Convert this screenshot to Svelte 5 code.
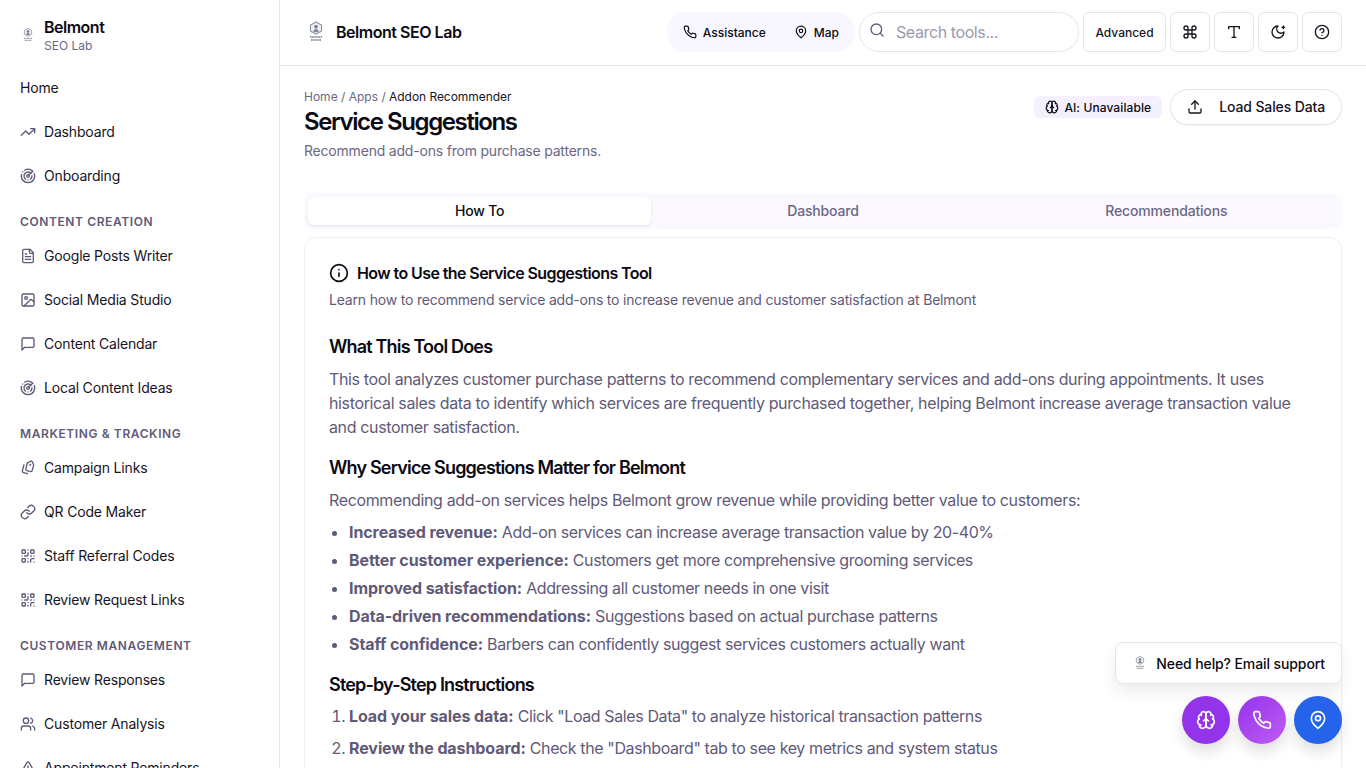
<script>
  const circle = (cx, cy, r) => `M${cx - r} ${cy}a${r} ${r} 0 1 0 ${r * 2} 0a${r} ${r} 0 1 0 ${-r * 2} 0`;
  const box = (x, y, s, r) => `M${x + r} ${y}h${s - 2 * r}a${r} ${r} 0 0 1 ${r} ${r}v${s - 2 * r}a${r} ${r} 0 0 1 ${-r} ${r}h${-(s - 2 * r)}a${r} ${r} 0 0 1 ${-r} ${-r}v${-(s - 2 * r)}a${r} ${r} 0 0 1 ${r} ${-r}z`;

  const icons = {
    trending: ['M22 7 13.5 15.5 8.5 10.5 2 17', 'M16 7h6v6'],
    radar: ['M19.07 4.93A10 10 0 0 0 6.99 3.34', 'M4 6h.01', 'M2.29 9.62A10 10 0 1 0 21.31 8.35', 'M16.24 7.76A6 6 0 1 0 8.23 16.67', 'M12 18h.01', 'M17.99 11.66A6 6 0 0 1 15.77 16.67', circle(12, 12, 2), 'm13.41 10.59 5.66-5.66'],
    file: ['M15 2H6a2 2 0 0 0-2 2v16a2 2 0 0 0 2 2h12a2 2 0 0 0 2-2V7Z', 'M14 2v4a2 2 0 0 0 2 2h4', 'M10 9H8', 'M16 13H8', 'M16 17H8'],
    image: [box(3, 3, 18, 2), circle(9, 9, 2), 'm21 15-3.086-3.086a2 2 0 0 0-2.828 0L6 21'],
    message: ['M21 15a2 2 0 0 1-2 2H7l-4 4V5a2 2 0 0 1 2-2h14a2 2 0 0 1 2 2z'],
    tags: ['m15 5 6.3 6.3a2.4 2.4 0 0 1 0 3.4L17 19', 'M9.586 5.586A2 2 0 0 0 8.172 5H3a1 1 0 0 0-1 1v5.172a2 2 0 0 0 .586 1.414L8.29 18.29a2.426 2.426 0 0 0 3.42 0l3.58-3.58a2.426 2.426 0 0 0 0-3.42z', circle(6.5, 9.5, 0.5)],
    link: ['M10 13a5 5 0 0 0 7.54.54l3-3a5 5 0 0 0-7.07-7.07l-1.72 1.71', 'M14 11a5 5 0 0 0-7.54-.54l-3 3a5 5 0 0 0 7.07 7.07l1.71-1.71'],
    qr: [box(3, 3, 5, 1), box(16, 3, 5, 1), box(3, 16, 5, 1), 'M21 16h-3a2 2 0 0 0-2 2v3', 'M21 21v.01', 'M12 7v3a2 2 0 0 1-2 2H7', 'M3 12h.01', 'M12 3h.01', 'M12 16v.01', 'M16 12h1', 'M21 12v.01', 'M12 21v-1'],
    users: ['M16 21v-2a4 4 0 0 0-4-4H6a4 4 0 0 0-4 4v2', circle(9, 7, 4), 'M22 21v-2a4 4 0 0 0-3-3.87', 'M16 3.13a4 4 0 0 1 0 7.75'],
    alert: ['m21.73 18-8-14a2 2 0 0 0-3.48 0l-8 14A2 2 0 0 0 4 21h16a2 2 0 0 0 1.73-3', 'M12 9v4', 'M12 17h.01'],
    phone: ['M22 16.92v3a2 2 0 0 1-2.18 2 19.79 19.79 0 0 1-8.63-3.07 19.5 19.5 0 0 1-6-6 19.79 19.79 0 0 1-3.07-8.67A2 2 0 0 1 4.11 2h3a2 2 0 0 1 2 1.72 12.84 12.84 0 0 0 .7 2.81 2 2 0 0 1-.45 2.11L8.09 9.91a16 16 0 0 0 6 6l1.27-1.27a2 2 0 0 1 2.11-.45 12.84 12.84 0 0 0 2.81.7A2 2 0 0 1 22 16.92z'],
    pin: ['M20 10c0 6-8 12-8 12s-8-6-8-12a8 8 0 0 1 16 0Z', circle(12, 10, 3)],
    search: [circle(11, 11, 8), 'm21 21-4.3-4.3'],
    command: ['M15 6v12a3 3 0 1 0 3-3H6a3 3 0 1 0 3 3V6a3 3 0 1 0-3 3h12a3 3 0 1 0-3-3'],
    type: ['M4 7V4h16v3', 'M9 20h6', 'M12 4v16'],
    moon: ['M12 3a6 6 0 0 0 9 9 9 9 0 1 1-9-9Z', 'M20 3v4', 'M22 5h-4'],
    help: [circle(12, 12, 10), 'M9.09 9a3 3 0 0 1 5.83 1c0 2-3 3-3 3', 'M12 17h.01'],
    brain: ['M12 5a3 3 0 1 0-5.997.125 4 4 0 0 0-2.526 5.77 4 4 0 0 0 .556 6.588A4 4 0 1 0 12 18Z', 'M12 5a3 3 0 1 1 5.997.125 4 4 0 0 1 2.526 5.77 4 4 0 0 1-.556 6.588A4 4 0 1 1 12 18Z', 'M15 13a4.5 4.5 0 0 1-3-4 4.5 4.5 0 0 1-3 4', 'M17.599 6.5a3 3 0 0 0 .399-1.375', 'M6.003 5.125A3 3 0 0 0 6.401 6.5', 'M3.477 10.896a4 4 0 0 1 .585-.396', 'M19.938 10.5a4 4 0 0 1 .585.396', 'M6 18a4 4 0 0 1-1.967-.516', 'M19.967 17.484A4 4 0 0 1 18 18'],
    upload: ['M21 15v4a2 2 0 0 1-2 2H5a2 2 0 0 1-2-2v-4', 'M17 8l-5-5-5 5', 'M12 3v12'],
    info: [circle(12, 12, 10), 'M12 16v-4', 'M12 8h.01']
  };

  const nav = [
    { items: [['Home'], ['Dashboard', 'trending'], ['Onboarding', 'radar']] },
    { label: 'Content Creation', items: [['Google Posts Writer', 'file'], ['Social Media Studio', 'image'], ['Content Calendar', 'message'], ['Local Content Ideas', 'radar']] },
    { label: 'Marketing & Tracking', items: [['Campaign Links', 'tags'], ['QR Code Maker', 'link'], ['Staff Referral Codes', 'qr'], ['Review Request Links', 'qr']] },
    { label: 'Customer Management', items: [['Review Responses', 'message'], ['Customer Analysis', 'users'], ['Appointment Reminders', 'alert']] }
  ];

  const why = [
    ['Increased revenue:', 'Add-on services can increase average transaction value by 20-40%'],
    ['Better customer experience:', 'Customers get more comprehensive grooming services'],
    ['Improved satisfaction:', 'Addressing all customer needs in one visit'],
    ['Data-driven recommendations:', 'Suggestions based on actual purchase patterns'],
    ['Staff confidence:', 'Barbers can confidently suggest services customers actually want']
  ];

  const steps = [
    ['Load your sales data:', 'Click "Load Sales Data" to analyze historical transaction patterns'],
    ['Review the dashboard:', 'Check the "Dashboard" tab to see key metrics and system status']
  ];

  const tabs = ['How To', 'Dashboard', 'Recommendations'];
</script>

{#snippet icon(name, size = 16)}
  <svg class="icon" width={size} height={size} viewBox="0 0 24 24" fill="none" stroke="currentColor" stroke-width="2" stroke-linecap="round" stroke-linejoin="round">
    {#each icons[name] as d}<path {d} />{/each}
  </svg>
{/snippet}

{#snippet logo(size)}
  <svg class="icon" width={size} height={size} viewBox="0 0 24 24" fill="none">
    <path d="M12 2l5.500 3v6L12 14l-5.500-3V5z" fill="#eceef2" stroke="#8d93a3" stroke-width="1.100" />
    <circle cx="12" cy="6.800" r="1.800" fill="#6f7686" />
    <path d="M9.500 12c0-2 1-3 2.500-3s2.500 1 2.500 3" fill="#7f8696" />
    <path d="M6 17h12M7 20h10" stroke="#9aa0ae" stroke-width="1.800" stroke-dasharray="1.600 .5" />
  </svg>
{/snippet}

<div class="app">
  <aside class="sidebar">
    <div class="brand">
      {@render logo(16)}
      <div class="brand-text">
        <strong>Belmont</strong>
        <span>SEO Lab</span>
      </div>
    </div>
    {#each nav as group}
      {#if group.label}<div class="group-label">{group.label}</div>{/if}
      {#each group.items as [label, name]}
        <a class="nav-item" href="#top">
          {#if name}<span class="nav-icon" class:tilted={name === 'tags'}>{@render icon(name, 16)}</span>{/if}
          {label}
        </a>
      {/each}
    {/each}
  </aside>

  <div class="main">
    <header class="topbar">
      <div class="site">
        {@render logo(24)}
        <span>Belmont SEO Lab</span>
      </div>
      <div class="tools">
        <div class="pill">
          <span class="pill-link">{@render icon('phone', 14)}Assistance</span>
          <span class="pill-link">{@render icon('pin', 14)}Map</span>
        </div>
        <div class="search">
          <span class="search-icon">{@render icon('search', 16)}</span>
          <input placeholder="Search tools..." />
        </div>
        <button class="tool wide">Advanced</button>
        <button class="tool">{@render icon('command', 16)}</button>
        <button class="tool">{@render icon('type', 16)}</button>
        <button class="tool">{@render icon('moon', 16)}</button>
        <button class="tool">{@render icon('help', 16)}</button>
      </div>
    </header>

    <main class="content">
      <div class="page-head">
        <div>
          <div class="crumbs">Home <i>/</i> Apps <i>/</i> <b>Addon Recommender</b></div>
          <h1>Service Suggestions</h1>
          <p class="lead">Recommend add-ons from purchase patterns.</p>
        </div>
        <div class="actions">
          <span class="badge">{@render icon('brain', 14)}AI: Unavailable</span>
          <button class="load">{@render icon('upload', 16)}<span>Load Sales Data</span></button>
        </div>
      </div>

      <div class="tabs">
        {#each tabs as tab, i}
          <button class="tab" class:active={i === 0}>{tab}</button>
        {/each}
      </div>

      <section class="card">
        <h2>{@render icon('info', 20)}How to Use the Service Suggestions Tool</h2>
        <p class="card-sub">Learn how to recommend service add-ons to increase revenue and customer satisfaction at Belmont</p>

        <h3>What This Tool Does</h3>
        <p>This tool analyzes customer purchase patterns to recommend complementary services and add-ons during appointments. It uses historical sales data to identify which services are frequently purchased together, helping Belmont increase average transaction value and customer satisfaction.</p>

        <h3>Why Service Suggestions Matter for Belmont</h3>
        <p>Recommending add-on services helps Belmont grow revenue while providing better value to customers:</p>
        <ul>
          {#each why as [lead, rest]}
            <li><strong>{lead}</strong> {rest}</li>
          {/each}
        </ul>

        <h3>Step-by-Step Instructions</h3>
        <ol>
          {#each steps as [lead, rest]}
            <li><strong>{lead}</strong> {rest}</li>
          {/each}
        </ol>
      </section>
    </main>
  </div>

  <div class="help-toast">
    {@render logo(16)}
    <span>Need help? Email support</span>
  </div>
  <div class="fabs">
    <button class="fab brain">{@render icon('brain', 20)}</button>
    <button class="fab call">{@render icon('phone', 20)}</button>
    <button class="fab map">{@render icon('pin', 20)}</button>
  </div>
</div>

<style>
  :global(body) {
    font-family: Inter, "Liberation Sans", sans-serif;
    background: #fff;
    color: #0c0a14;
    overflow: hidden;
  }

  .app {
    display: flex;
    height: 768px;
    overflow: hidden;
    position: relative;
  }

  .icon {
    display: block;
    flex-shrink: 0;
  }

  .sidebar {
    width: 280px;
    flex-shrink: 0;
    box-sizing: border-box;
    border-right: 1px solid #e5e5ea;
    padding: 0 20px;
    overflow: hidden;
  }

  .brand {
    display: flex;
    align-items: center;
    gap: 8px;
    height: 66px;
    box-sizing: border-box;
    padding-top: 3px;
  }

  .brand-text {
    display: flex;
    flex-direction: column;
  }

  .brand-text strong {
    font-size: 16px;
    line-height: 22px;
    font-weight: 600;
    letter-spacing: -0.5px;
  }

  .brand-text span {
    font-size: 12px;
    line-height: 16px;
    color: #6b6785;
  }

  .nav-item {
    display: flex;
    align-items: center;
    gap: 8px;
    height: 44px;
    box-sizing: border-box;
    padding-bottom: 1px;
    font-size: 14px;
    letter-spacing: -0.17px;
    color: #17141f;
    text-decoration: none;
  }

  .nav-icon {
    color: #5f5a78;
  }

  .nav-icon.tilted {
    transform: rotate(-30deg) scaleX(-1);
  }

  .group-label {
    height: 24px;
    margin-top: 12px;
    line-height: 24px;
    font-size: 12px;
    font-weight: 600;
    letter-spacing: 0.05em;
    text-transform: uppercase;
    color: #5f5a78;
  }

  .main {
    flex: 1;
    min-width: 0;
  }

  .topbar {
    height: 66px;
    box-sizing: border-box;
    border-bottom: 1px solid #e5e5ea;
    padding: 0 24px 1px;
    display: flex;
    align-items: center;
    justify-content: space-between;
  }

  .site {
    display: flex;
    align-items: center;
    gap: 8px;
    font-size: 16px;
    font-weight: 600;
    letter-spacing: -0.47px;
  }

  .tools {
    display: flex;
    align-items: center;
    gap: 4px;
  }

  .pill {
    display: flex;
    align-items: center;
    gap: 28px;
    height: 40px;
    padding: 0 16px;
    border-radius: 20px;
    background: #f8f6fe;
  }

  .pill-link {
    display: flex;
    align-items: center;
    gap: 6px;
    font-size: 12px;
    font-weight: 500;
  }

  .search {
    position: relative;
    width: 220px;
  }

  .search-icon {
    position: absolute;
    left: 10px;
    top: 10px;
    color: #5f5a78;
  }

  .search input {
    display: block;
    width: 100%;
    height: 40px;
    box-sizing: border-box;
    border: 1px solid #e5e5ea;
    border-radius: 20px;
    padding: 0 12px 0 36px;
    font: 16px Inter, sans-serif;
    letter-spacing: -0.4px;
    outline: none;
  }

  .search input::placeholder {
    color: #9a9aac;
  }

  .tool {
    width: 40px;
    height: 40px;
    display: flex;
    align-items: center;
    justify-content: center;
    border: 1px solid #e5e5ea;
    border-radius: 6px;
    background: #fff;
    color: #17141f;
    font: 500 12px Inter, sans-serif;
    padding: 0;
  }

  .tool.wide {
    width: 83px;
  }

  .content {
    padding: 23px 24px 0;
  }

  .page-head {
    display: flex;
    justify-content: space-between;
    align-items: flex-start;
  }

  .crumbs {
    font-size: 12px;
    line-height: 16px;
    color: #6b6785;
  }

  .crumbs i {
    font-style: normal;
  }

  .crumbs b {
    font-weight: 400;
    color: #17141f;
    letter-spacing: -0.05px;
  }

  h1 {
    margin: 1px 0 0;
    font-size: 24px;
    line-height: 32px;
    font-weight: 600;
    letter-spacing: -1.4px;
  }

  .lead {
    margin: 3px 0 0;
    font-size: 14px;
    line-height: 20px;
    letter-spacing: -0.2px;
    color: #6b6785;
  }

  .actions {
    display: flex;
    align-items: center;
    gap: 8px;
  }

  .badge {
    display: flex;
    align-items: center;
    gap: 5px;
    height: 22px;
    padding: 0 11px;
    border-radius: 6px;
    background: #f4f0fd;
    font-size: 12px;
    font-weight: 500;
    letter-spacing: 0.1px;
  }

  .load {
    display: flex;
    align-items: center;
    gap: 16px;
    height: 36px;
    padding: 0 16px 1px;
    border: 1px solid #e5e5ea;
    border-radius: 18px;
    background: #fff;
    color: #17141f;
    font: 500 14px Inter, sans-serif;
    letter-spacing: -0.13px;
    box-shadow: 0 1px 2px rgba(0, 0, 0, 0.05);
  }

  .tabs {
    display: grid;
    grid-template-columns: repeat(3, 1fr);
    height: 36px;
    box-sizing: border-box;
    margin-top: 32px;
    padding: 4px;
    border-radius: 8px;
    background: #fbf9ff;
  }

  .tab {
    border: 0;
    background: none;
    border-radius: 6px;
    font: 500 14px Inter, sans-serif;
    letter-spacing: -0.17px;
    color: #6b6785;
    padding: 0 0 1px;
  }

  .tab.active {
    background: #fff;
    color: #0c0a14;
    box-shadow: 0 1px 3px rgba(0, 0, 0, 0.1);
  }

  .card {
    margin-top: 8px;
    padding: 25px 24px 24px;
    border: 1px solid #eeedf2;
    border-radius: 12px;
    font-size: 16px;
    line-height: 24px;
    letter-spacing: -0.36px;
    color: #5f5a78;
  }

  h2 {
    display: flex;
    align-items: center;
    gap: 8px;
    margin: 0;
    font-size: 16px;
    line-height: 20px;
    font-weight: 600;
    letter-spacing: -0.59px;
    color: #0c0a14;
  }

  .card-sub {
    margin: 7px 0 23px;
    font-size: 14px;
    line-height: 20px;
    letter-spacing: -0.19px;
  }

  h3 {
    margin: 15px 0 6px;
    font-size: 18px;
    line-height: 28px;
    font-weight: 600;
    letter-spacing: -0.82px;
    color: #0c0a14;
  }

  .card p:not(.card-sub) {
    margin: 0;
  }

  ul, ol {
    margin: 8px 0 0;
    padding-left: 20px;
  }

  ol {
    margin-top: -1px;
  }

  li {
    height: 28px;
    line-height: 24px;
    letter-spacing: -0.39px;
  }

  ul li:last-child {
    height: 24px;
  }

  ol li {
    height: 32px;
  }

  li strong {
    font-weight: 700;
    letter-spacing: -0.09px;
  }

  .help-toast {
    position: absolute;
    right: 24px;
    top: 642px;
    display: flex;
    align-items: center;
    gap: 8px;
    height: 42px;
    box-sizing: border-box;
    padding: 0 16px;
    background: #fff;
    border: 1px solid #e5e5ea;
    border-radius: 8px;
    font-size: 14px;
    font-weight: 500;
    letter-spacing: -0.1px;
    box-shadow: 0 8px 16px rgba(0, 0, 0, 0.08);
  }

  .fabs {
    position: absolute;
    right: 24px;
    top: 696px;
    display: flex;
    gap: 8px;
  }

  .fab {
    width: 48px;
    height: 48px;
    border: 0;
    border-radius: 50%;
    padding: 0;
    display: flex;
    align-items: center;
    justify-content: center;
    color: #fff;
    box-shadow: 0 8px 14px rgba(0, 0, 0, 0.12);
  }

  .fab.brain {
    background: #9333ea;
  }

  .fab.call {
    background: linear-gradient(135deg, #9333ea, #c05cf5);
  }

  .fab.map {
    background: #2563eb;
  }
</style>
